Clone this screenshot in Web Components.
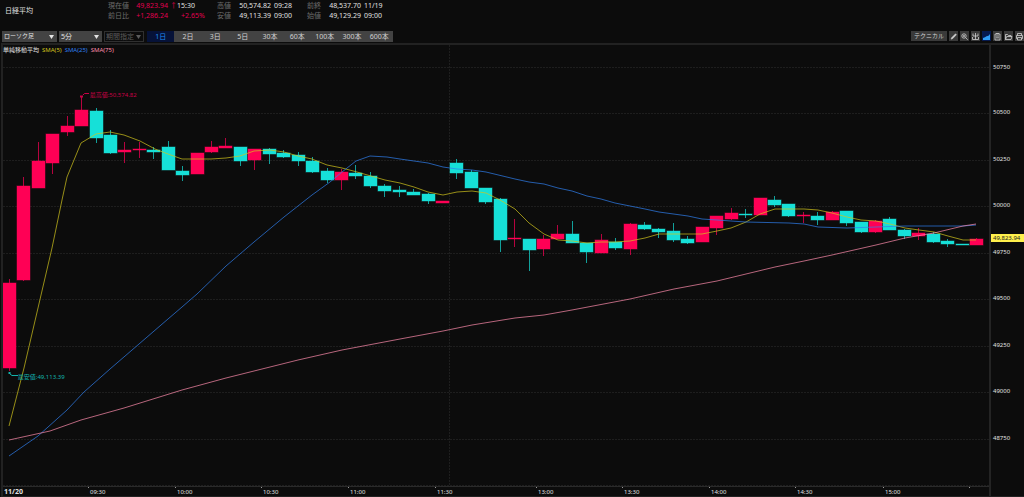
<!DOCTYPE html>
<html lang="ja">
<head>
<meta charset="utf-8">
<title>日経平均</title>
<style>
  body {
    margin: 0;
    background: #0c0c0c;
    color: #e0e0e0;
    font-family: "Noto Sans", "Noto Sans CJK JP", sans-serif;
    font-size: 7px;
    line-height: 10px;
  }
</style>
</head>
<body>
<trading-app></trading-app>

<script>
const UP = '#ff0055';
const DOWN = '#16e0d8';

// [direction, body top, body bottom, high, low] in plot units
const CANDLES = [
  [1, 283, 368, 279, 371], [1, 186, 280, 177, 281], [1, 161, 188, 142, 188], [1, 134, 163, 134, 174],
  [1, 126, 132, 116, 136], [1, 110, 126, 97, 126], [0, 111, 138, 108, 143], [0, 135, 153, 130, 154],
  [1, 150, 152, 142, 163], [1, 149, 150, 142, 158], [0, 150, 152, 147, 159], [0, 147, 170, 141, 170],
  [0, 171, 175, 166, 181], [1, 153, 174, 153, 174], [1, 147, 152, 141, 153], [1, 146, 148, 138, 148],
  [0, 147, 161, 147, 166], [1, 149, 160, 149, 170], [0, 149, 154, 148, 164], [0, 153, 157, 150, 158],
  [0, 155, 161, 152, 166], [0, 161, 172, 157, 173], [0, 171, 180, 168, 183], [1, 172, 180, 169, 190],
  [0, 173, 176, 165, 179], [0, 176, 186, 172, 188], [0, 186, 191, 184, 197], [0, 190, 192, 186, 197],
  [0, 192, 195, 189, 195], [0, 194, 201, 193, 204], [1, 201, 203, 201, 203], [0, 163, 173, 159, 179],
  [0, 172, 188, 170, 188], [0, 188, 202, 188, 204], [0, 199, 240, 198, 252], [1, 238, 239, 219, 247],
  [0, 239, 250, 239, 271], [1, 239, 249, 235, 256], [1, 234, 239, 225, 239], [0, 234, 243, 221, 243],
  [0, 243, 252, 243, 263], [1, 240, 253, 234, 253], [0, 242, 248, 238, 250], [1, 224, 249, 223, 255],
  [0, 225, 229, 222, 230], [0, 229, 232, 228, 238], [0, 231, 240, 223, 242], [0, 239, 243, 236, 244],
  [1, 227, 242, 227, 242], [1, 216, 228, 216, 235], [1, 213, 219, 208, 220], [0, 214, 215, 209, 218],
  [1, 198, 215, 198, 215], [0, 200, 205, 196, 207], [0, 204, 216, 204, 217], [1, 215, 216, 212, 223],
  [0, 216, 220, 212, 225], [1, 212, 220, 211, 220], [0, 211, 223, 211, 226], [0, 222, 232, 222, 233],
  [1, 221, 232, 220, 233], [0, 219, 230, 217, 230], [0, 230, 236, 229, 239], [1, 233, 236, 228, 240],
  [0, 234, 242, 232, 243], [0, 241, 244, 239, 247], [0, 244, 245, 244, 245], [1, 239, 245, 238, 245],
];

const SMA = [
  ['#d2c41c', '9,426 24,368 38,308 52,248 62,200 67,177 81,143 96,134 110,132 124,135 140,141 155,149 168,154 182,159 211,159 226,158 240,156 254,151 270,150 284,152 298,156 312,159 327,165 342,168 357,172 371,176 385,180 400,183 414,187 428,192 443,195 457,192 472,191 486,193 500,200 515,209 529,223 544,234 558,240 572,241 587,243 601,242 615,242 630,241 645,238 659,234 702,234 717,231 731,228 746,222 760,214 775,209 789,209 804,209 818,210 832,213 847,217 861,220 876,221 890,224 905,228 919,230 934,232 948,236 963,240 976,240'],
  ['#2f7fee', '9,456 38,436 67,410 84,392 110,369 139,344 168,319 182,307 197,294 226,266 240,254 254,242 284,217 312,195 330,182 342,172 356,161 370,156 387,157 400,159 428,163 443,167 457,169 472,170 486,172 515,179 529,182 544,184 558,188 572,191 587,196 601,199 615,203 630,206 645,209 659,212 688,216 702,219 717,220 731,221 746,222 789,223 804,224 818,227 847,228 876,227 905,226 963,226 976,225'],
  ['#ff8cac', '9,440 50,431 81,420 124,408 182,390 226,378 254,371 298,360 342,350 400,339 443,331 472,325 515,318 544,315 572,310 630,299 674,289 717,281 775,267 804,261 832,255 876,245 905,238 934,233 963,226 976,224'],
];

class QuoteHeader extends HTMLElement {
  constructor() {
    super();
    this.attachShadow({ mode: 'open' });
  }

  connectedCallback() {
    this.shadowRoot.innerHTML = `
      <style>
        :host { display: flex; height: 30px; padding-left: 5px; box-sizing: border-box; }
        h1 { margin: 0; padding-top: 6px; width: 103px; font-size: 7px; font-weight: 400; }
        dl {
          display: grid;
          grid-template-columns: 20px 31px 18px;
          grid-auto-rows: 10px;
          column-gap: 3px;
          align-content: start;
          margin: 0;
          padding-top: 1px;
          width: 90px;
          white-space: nowrap;
        }
        dl.now { grid-template-columns: 25px 33px 4px 30px; width: 109px; column-gap: 2px; }
        dt { color: #6d6d6d; }
        dd { display: flex; justify-content: end; margin: 0; }
        dd + dd { justify-content: start; }
        .up { color: #e00050; }
        .time { padding-left: 1px; }
        .rate { grid-column: 3 / 5; padding-left: 11px; }
      </style>
      <h1>日経平均</h1>
      <dl class="now">
        <dt>現在値</dt><dd class="up">49,823.94</dd><dd class="up">↑</dd><dd class="time">15:30</dd>
        <dt>前日比</dt><dd class="up">+1,286.24</dd><dd class="up rate">+2.65%</dd>
      </dl>
      <dl>
        <dt>高値</dt><dd>50,574.82</dd><dd>09:28</dd>
        <dt>安値</dt><dd>49,113.39</dd><dd>09:00</dd>
      </dl>
      <dl>
        <dt>前終</dt><dd>48,537.70</dd><dd>11/19</dd>
        <dt>始値</dt><dd>49,129.29</dd><dd>09:00</dd>
      </dl>
    `;
  }
}

class DropDown extends HTMLElement {
  constructor() {
    super();
    this.attachShadow({ mode: 'open' });
  }

  connectedCallback() {
    const off = this.hasAttribute('disabled');
    this.shadowRoot.innerHTML = `
      <style>
        :host { display: grid; align-items: center; background: #434343; color: #e4e4e4; }
        :host([disabled]) { background: #0c0c0c; color: #5c5c5c; box-shadow: inset 0 0 0 1px #303030; }
        select, svg { grid-area: 1 / 1; }
        select {
          appearance: none;
          width: 100%;
          height: 11px;
          padding: 0 0 0 2px;
          border: 0;
          background: none;
          color: inherit;
          opacity: 1;
          font: inherit;
          line-height: 11px;
        }
        svg { justify-self: end; width: 5px; height: 4px; margin-right: 3px; fill: currentColor; pointer-events: none; }
      </style>
      <select aria-label="${this.getAttribute('label')}" ${off ? 'disabled' : ''}>
        <option>${this.getAttribute('value')}</option>
      </select>
      <svg viewBox="0 0 5 4"><path d="M0 0h5L2.5 4z"/></svg>
    `;
  }
}

const ICONS = {
  '描画': '<path d="M2 7.2l.5-1.500L6.500 1.700l1 1L3.600 6.700z" fill="currentColor" stroke-width="0.4"/>',
  '拡大': '<circle cx="4" cy="4" r="2.200"/><path d="M5.600 5.600L7.700 7.800M3 4h2M4 3v2"/>',
  '分割': '<path d="M4.500 1v6.500M2 1.500v2.500h5V1.500M1.500 5v2.500h6V5"/>',
  'チャート': '<path d="M1 8V6l2-.700 1.500-1.100 2-.500L8 2v6z" fill="currentColor" stroke="none"/>',
  '保存': '<path d="M2 2h5v6H2zM3 1.500h3M3 4h3M3 5.800h3"/>',
  '開く': '<path d="M1.500 7.500v-5h2l1 1h2.500v1M1.500 7.500l1.200-3h5.300l-1 3z"/>',
  '印刷': '<path d="M2.500 3.500V1.500h4v2M2.500 6.500h-1v-3h6v3h-1M2.500 5.500h4v2.500h-4z"/>',
};

class ChartToolbar extends HTMLElement {
  constructor() {
    super();
    this.attachShadow({ mode: 'open' });
  }

  connectedCallback() {
    const spans = ['1日', '2日', '3日', '5日', '30本', '60本', '100本', '300本', '600本'];
    this.shadowRoot.innerHTML = `
      <style>
        :host { display: flex; gap: 2px; height: 13px; padding: 1px 0 0 2px; align-items: start; box-sizing: border-box; }
        .kind { width: 55px; font-size: 6px; }
        .foot { width: 43px; }
        .period { width: 40px; }
        button {
          display: grid;
          place-items: center;
          height: 11px;
          padding: 0;
          border: 0;
          background: #434343;
          color: #d0d0d0;
          font: inherit;
          line-height: 11px;
          white-space: nowrap;
        }
        .spans { display: grid; grid-template-columns: repeat(9, 1fr); width: 246px; margin-left: 1px; }
        .spans .on { background: #061238; color: #1f8ff0; }
        .tools { display: flex; gap: 2px; margin-left: auto; }
        .tools button { width: 9px; height: 10px; background: #3a3a3a; }
        .tools .tech { width: 36px; font-size: 6px; line-height: 10px; }
        .tools .on { background: #061a50; color: #2f9cf5; }
        svg { width: 9px; height: 9px; fill: none; stroke: currentColor; stroke-width: 0.8; }
      </style>
      <drop-down class="kind" label="足種" value="ローソク足"></drop-down>
      <drop-down class="foot" label="足" value="5分"></drop-down>
      <drop-down class="period" label="期間" value="期間指定" disabled></drop-down>
      <div class="spans">
        ${spans.map((s, i) => `<button type="button" class="${i ? '' : 'on'}">${s}</button>`).join('')}
      </div>
      <div class="tools">
        <button type="button" class="tech">テクニカル</button>
        ${Object.entries(ICONS).map(([name, d]) => `
          <button type="button" class="${name === 'チャート' ? 'on' : ''}" aria-label="${name}">
            <svg viewBox="0 0 9 9">${d}</svg>
          </button>`).join('')}
      </div>
    `;
  }
}

class CandleChart extends HTMLElement {
  constructor() {
    super();
    this.attachShadow({ mode: 'open' });
  }

  drawCandles() {
    const step = 967 / (CANDLES.length - 1);
    return CANDLES.map(([up, top, bottom, high, low], i) => {
      const x = Math.round(9.5 + i * step - 0.5);
      const fill = up ? UP : DOWN;
      return `<rect x="${x}" y="${high}" width="1" height="${low - high}" fill="${fill}" opacity="0.7"/>
        <rect x="${x - 6}" y="${top}" width="13" height="${bottom - top}" fill="${fill}" stroke="${fill}" stroke-opacity="0.45"/>`;
    }).join('');
  }

  connectedCallback() {
    const rows = [67, 113, 160, 206, 253, 299, 346, 392, 439, 485];
    this.shadowRoot.innerHTML = `
      <style>
        :host { display: block; position: relative; min-height: 0; overflow: hidden; }
        svg { display: block; width: 100%; height: 100%; }
        .grid { stroke: #1e1e1e; stroke-dasharray: 2 1; }
        .sma { fill: none; stroke-width: 1; opacity: 0.7; }
        .legend, .note { position: absolute; margin: 0; font-size: 6px; line-height: 8px; white-space: nowrap; }
        .legend { top: 1px; left: 0; display: flex; gap: 3px; }
        .high { left: 8.800%; top: 10.500%; color: #c80046; }
        .low { left: 1.500%; top: 74.300%; color: #12b4ac; }
      </style>
      <svg viewBox="3 45 986 441" preserveAspectRatio="none" role="img" aria-label="日経平均 5分足">
        <g class="grid">
          ${rows.map(y => `<path d="M3 ${y + 0.5}H989"/>`).join('')}
          <path d="M449.500 45V486"/>
        </g>
        ${this.drawCandles()}
        ${SMA.map(([color, points]) => `<polyline class="sma" stroke="${color}" points="${points}"/>`).join('')}
        <g fill="none" stroke="#c80046"><path d="M80 96.500h3" stroke-width="2"/><path d="M83 95l1.500-1.500H89"/></g>
        <g fill="none" stroke="#12b4ac"><path d="M8.500 373h2" stroke-width="2"/><path d="M10 374l2 1.500h6"/></g>
      </svg>
      <p class="legend">
        <span>単純移動平均</span>
        ${SMA.map(([color], i) => `<span style="color:${color}">SMA(${[5, 25, 75][i]})</span>`).join('')}
      </p>
      <p class="note high">最高値:50,574.82</p>
      <p class="note low">最安値:49,113.39</p>
    `;
  }
}

class PriceAxis extends HTMLElement {
  constructor() {
    super();
    this.attachShadow({ mode: 'open' });
  }

  connectedCallback() {
    const prices = [50750, 50500, 50250, 50000, 49750, 49500, 49250, 49000, 48750];
    this.shadowRoot.innerHTML = `
      <style>
        :host {
          display: grid;
          grid-template-rows: 88fr repeat(8, 93fr) 50fr;
          align-items: center;
          position: relative;
          padding: 0 0 10px 2px;
          border-left: 2px solid #242424;
          font-size: 6px;
          line-height: 8px;
        }
        .last {
          position: absolute;
          top: 42%;
          left: 0;
          right: 0;
          padding-left: 2px;
          background: #fff04c;
          color: #222;
        }
      </style>
      ${prices.map(p => `<span>${p}</span>`).join('')}
      <output class="last">49,823.94</output>
    `;
  }
}

class TimeAxis extends HTMLElement {
  constructor() {
    super();
    this.attachShadow({ mode: 'open' });
  }

  connectedCallback() {
    const times = ['09:30', '10:00', '10:30', '11:00', '11:30', '13:00', '13:30', '14:00', '14:30', '15:00', ''];
    this.shadowRoot.innerHTML = `
      <style>
        :host {
          display: grid;
          grid-template-columns: 85fr 87fr 86fr 87fr 87fr 101fr 86fr 87fr 86fr 88fr 86fr 20fr;
          border-top: 1px solid #2a2a2a;
          font-size: 6px;
          line-height: 10px;
        }
        b { padding-left: 1px; font-size: 7px; }
        span { padding-left: 2px; background: linear-gradient(#999, #999) no-repeat 0 0 / 1px 1px; }
      </style>
      <b>11/20</b>
      ${times.map(t => `<span>${t}</span>`).join('')}
    `;
  }
}

class TradingApp extends HTMLElement {
  constructor() {
    super();
    this.attachShadow({ mode: 'open' });
  }

  connectedCallback() {
    this.shadowRoot.innerHTML = `
      <style>
        :host { display: flex; flex-direction: column; height: 100vh; min-height: 300px; }
        main {
          flex: 1;
          min-height: 0;
          display: grid;
          grid-template-columns: 1fr 35px;
          grid-template-rows: 1fr 10px;
          margin-left: 1px;
          border: solid #222;
          border-width: 2px 0 1px 2px;
        }
        price-axis { grid-row: 1 / 3; grid-column: 2; }
      </style>
      <quote-header></quote-header>
      <chart-toolbar></chart-toolbar>
      <main>
        <candle-chart></candle-chart>
        <price-axis></price-axis>
        <time-axis></time-axis>
      </main>
    `;
  }
}

customElements.define('quote-header', QuoteHeader);
customElements.define('drop-down', DropDown);
customElements.define('chart-toolbar', ChartToolbar);
customElements.define('candle-chart', CandleChart);
customElements.define('price-axis', PriceAxis);
customElements.define('time-axis', TimeAxis);
customElements.define('trading-app', TradingApp);
</script>
</body>
</html>
